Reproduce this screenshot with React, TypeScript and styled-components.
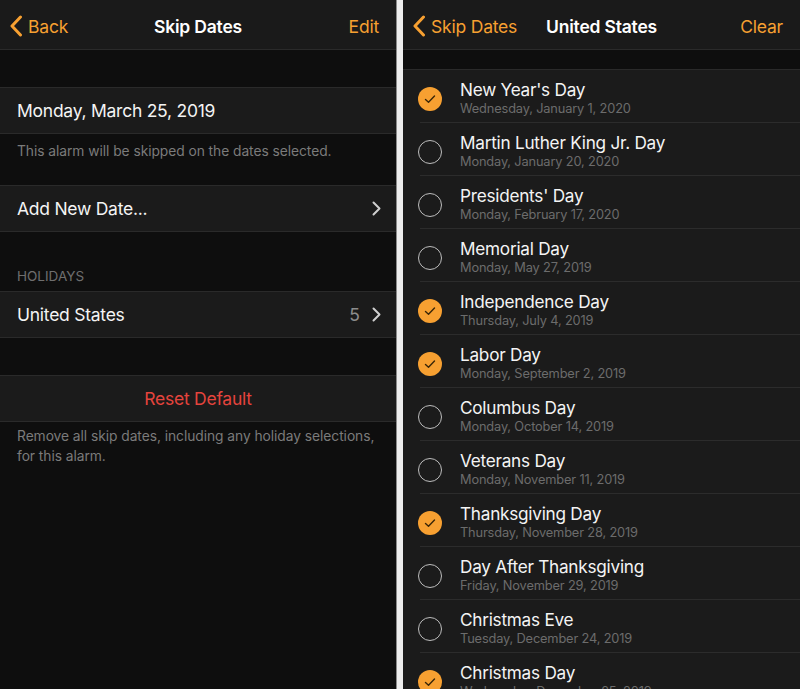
import React from "react";
import styled, { createGlobalStyle } from "styled-components";

const GlobalStyle = createGlobalStyle`
  html, body {
    margin: 0;
    padding: 0;
    background: #f2f2f2;
  }
  body {
    font-family: Inter, "Noto Sans", "Liberation Sans", sans-serif;
    -webkit-font-smoothing: antialiased;
  }
`;

const ORANGE = "#f7a031";

const Page = styled("div")`
  width: 800px;
  height: 689px;
  display: flex;
  justify-content: space-between;
  overflow: hidden;
  background: #ededed;
`;

const Screen = styled("div")<{ $edge?: boolean }>`
  width: 397px;
  height: 689px;
  background: #0e0e0e;
  display: flex;
  flex-direction: column;
  overflow: hidden;
  border-right: ${(p) => (p.$edge ? "1px solid #8a8a8a" : "0")};
  box-sizing: border-box;
`;

const NavBar = styled("div")`
  height: 50px;
  flex: 0 0 50px;
  box-sizing: border-box;
  background: #1a1a1a;
  border-bottom: 1px solid #2a2a2a;
  display: grid;
  grid-template-columns: 1fr auto 1fr;
  align-items: center;
  padding: 3px 17px 0;
`;

const NavButton = styled("button")<{ $align?: "left" | "right" }>`
  background: none;
  border: 0;
  padding: 0;
  color: ${ORANGE};
  font: inherit;
  font-size: 17.5px;
  letter-spacing: -0.2px;
  display: flex;
  align-items: center;
  gap: 5px;
  justify-self: ${(p) => (p.$align === "right" ? "end" : "start")};
  margin-left: ${(p) => (p.$align === "right" ? "0" : "-8px")};
`;

const NavTitle = styled("div")`
  color: #fff;
  font-size: 17.5px;
  font-weight: 600;
  letter-spacing: -0.2px;
  text-align: center;
`;

const Gap = styled("div")<{ $h: number }>`
  flex: 0 0 ${(p) => p.$h}px;
`;

const Group = styled("div")`
  background: #1b1b1b;
  border-top: 1px solid #2a2a2a;
  border-bottom: 1px solid #2a2a2a;
`;

const Row = styled("div")<{ $center?: boolean }>`
  height: 45px;
  display: flex;
  align-items: center;
  justify-content: ${(p) => (p.$center ? "center" : "space-between")};
  padding: 0 17px;
`;

const RowLabel = styled("span")<{ $danger?: boolean }>`
  color: ${(p) => (p.$danger ? "#e5443d" : "#f4f4f4")};
  font-size: 17.5px;
  letter-spacing: -0.25px;
`;

const RowDetail = styled("span")`
  display: flex;
  align-items: center;
  gap: 12px;
  color: #8c8c8c;
  font-size: 17.5px;
  margin-right: -2px;
`;

const Footer = styled("div")<{ $h: number; $top: number }>`
  flex: 0 0 ${(p) => p.$h}px;
  box-sizing: border-box;
  padding: ${(p) => p.$top}px 17px 0;
  color: #7b7b7b;
  font-size: 13.8px;
  line-height: 20px;
  letter-spacing: -0.05px;
`;

const Header = styled("div")`
  flex: 0 0 59px;
  box-sizing: border-box;
  display: flex;
  align-items: flex-end;
  padding: 0 17px 7px;
  color: #6e6e6e;
  font-size: 13.5px;
`;

const List = styled("div")`
  background: #1b1b1b;
  border-top: 1px solid #2a2a2a;
  flex: 1;
`;

const Item = styled("div")`
  height: 53px;
  box-sizing: border-box;
  display: flex;
  align-items: flex-start;
  padding-left: 15px;
  position: relative;
  &::after {
    content: "";
    position: absolute;
    left: 17px;
    right: 0;
    bottom: 0;
    border-bottom: 1px solid #2c2c2c;
  }
`;

const Check = styled("div")<{ $on: boolean }>`
  width: 24px;
  height: 24px;
  margin-top: 17px;
  box-sizing: border-box;
  border-radius: 50%;
  flex: 0 0 24px;
  display: flex;
  align-items: center;
  justify-content: center;
  background: ${(p) => (p.$on ? ORANGE : "transparent")};
  border: ${(p) => (p.$on ? "0" : "1.5px solid #bdbdbd")};
`;

const ItemText = styled("div")`
  margin-left: 18px;
  display: flex;
  flex-direction: column;
  padding-top: 9px;
`;

const ItemTitle = styled("span")`
  color: #f4f4f4;
  font-size: 17.2px;
  line-height: 21px;
  letter-spacing: -0.25px;
`;

const ItemSub = styled("span")`
  color: #6c6c6c;
  font-size: 12.8px;
  line-height: 17px;
  letter-spacing: -0.15px;
`;

const BackChevron = () => (
  <svg width="14" height="22" viewBox="0 0 14 22">
    <path d="M11.5 2 L3 11 L11.5 20" fill="none" stroke={ORANGE} strokeWidth="3" strokeLinecap="round" strokeLinejoin="round" />
  </svg>
);

const Disclosure = () => (
  <svg width="9" height="15" viewBox="0 0 9 15">
    <path d="M1.5 1.5 L7.5 7.5 L1.5 13.5" fill="none" stroke="#cfcfcf" strokeWidth="2" strokeLinecap="round" strokeLinejoin="round" />
  </svg>
);

const Tick = () => (
  <svg width="14" height="12" viewBox="0 0 14 12">
    <path d="M2.5 6.5 L5.5 9.2 L11.5 3" fill="none" stroke="#3a2608" strokeWidth="1.4" strokeLinecap="round" strokeLinejoin="round" />
  </svg>
);

const holidays = [
  { name: "New Year's Day", date: "Wednesday, January 1, 2020", on: true },
  { name: "Martin Luther King Jr. Day", date: "Monday, January 20, 2020", on: false },
  { name: "Presidents' Day", date: "Monday, February 17, 2020", on: false },
  { name: "Memorial Day", date: "Monday, May 27, 2019", on: false },
  { name: "Independence Day", date: "Thursday, July 4, 2019", on: true },
  { name: "Labor Day", date: "Monday, September 2, 2019", on: true },
  { name: "Columbus Day", date: "Monday, October 14, 2019", on: false },
  { name: "Veterans Day", date: "Monday, November 11, 2019", on: false },
  { name: "Thanksgiving Day", date: "Thursday, November 28, 2019", on: true },
  { name: "Day After Thanksgiving", date: "Friday, November 29, 2019", on: false },
  { name: "Christmas Eve", date: "Tuesday, December 24, 2019", on: false },
  { name: "Christmas Day", date: "Wednesday, December 25, 2019", on: true },
];

export default function App() {
  return (
    <>
      <GlobalStyle />
      <Page>
        <Screen $edge>
          <NavBar>
            <NavButton>
              <BackChevron />
              Back
            </NavButton>
            <NavTitle>Skip Dates</NavTitle>
            <NavButton $align="right">Edit</NavButton>
          </NavBar>
          <Gap $h={37} />
          <Group>
            <Row>
              <RowLabel>Monday, March 25, 2019</RowLabel>
            </Row>
          </Group>
          <Footer $h={51} $top={7}>This alarm will be skipped on the dates selected.</Footer>
          <Group>
            <Row>
              <RowLabel>Add New Date...</RowLabel>
              <RowDetail>
                <Disclosure />
              </RowDetail>
            </Row>
          </Group>
          <Header>HOLIDAYS</Header>
          <Group>
            <Row>
              <RowLabel>United States</RowLabel>
              <RowDetail>
                5
                <Disclosure />
              </RowDetail>
            </Row>
          </Group>
          <Gap $h={37} />
          <Group>
            <Row $center>
              <RowLabel $danger>Reset Default</RowLabel>
            </Row>
          </Group>
          <Footer $h={80} $top={4}>
            Remove all skip dates, including any holiday selections, for this alarm.
          </Footer>
        </Screen>
        <Screen>
          <NavBar>
            <NavButton>
              <BackChevron />
              Skip Dates
            </NavButton>
            <NavTitle>United States</NavTitle>
            <NavButton $align="right">Clear</NavButton>
          </NavBar>
          <Gap $h={19} />
          <List>
            {holidays.map((h) => (
              <Item key={h.name}>
                <Check $on={h.on}>{h.on && <Tick />}</Check>
                <ItemText>
                  <ItemTitle>{h.name}</ItemTitle>
                  <ItemSub>{h.date}</ItemSub>
                </ItemText>
              </Item>
            ))}
          </List>
        </Screen>
      </Page>
    </>
  );
}
